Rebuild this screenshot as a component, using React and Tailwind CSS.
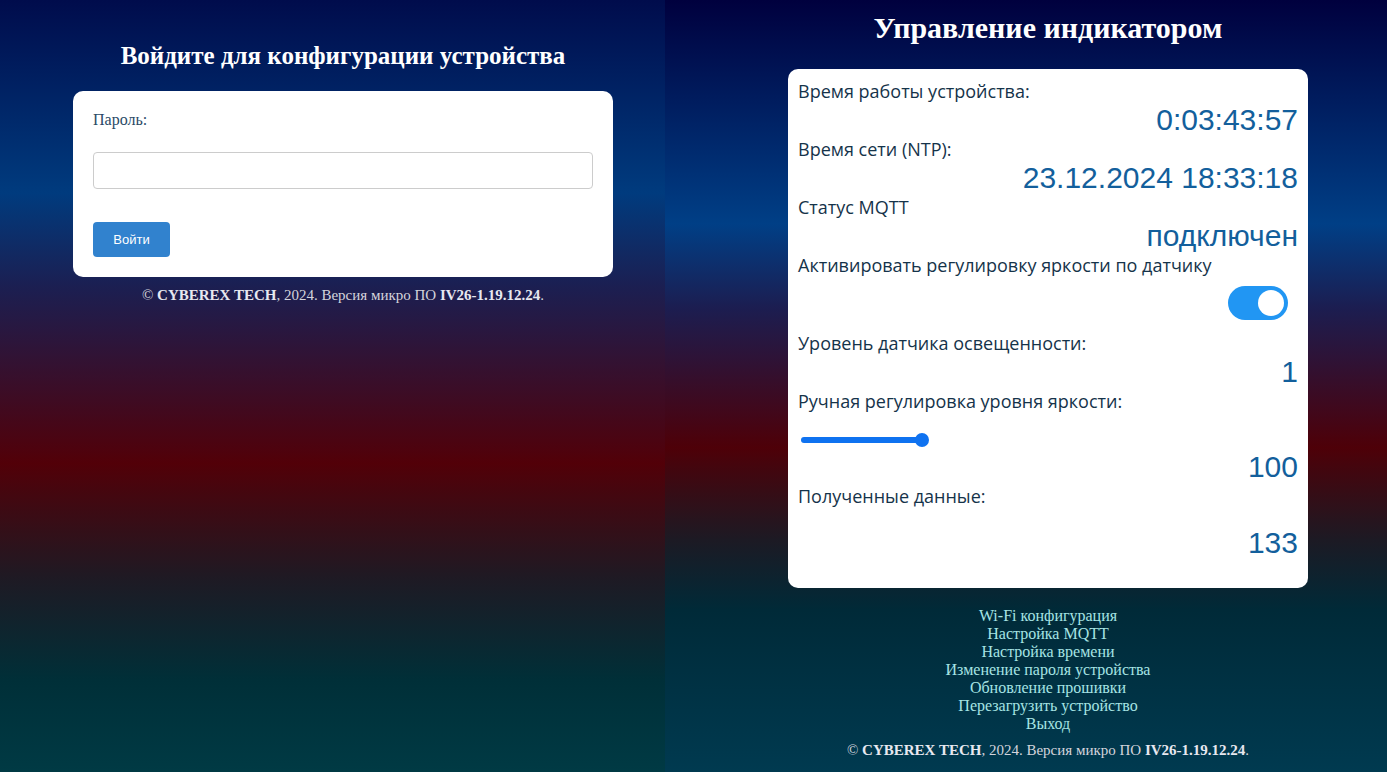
import React from "react";

const links = [
  "Wi-Fi конфигурация",
  "Настройка MQTT",
  "Настройка времени",
  "Изменение пароля устройства",
  "Обновление прошивки",
  "Перезагрузить устройство",
  "Выход",
];

const Footer = ({ className = "" }) => (
  <p className={`text-center text-[15px] leading-[16px] text-[#d4d4dc] ${className}`}>
    © <b className="text-[#e8e8f0]">CYBEREX TECH</b>, 2024. Версия микро ПО <b className="text-[#e8e8f0]">IV26-1.19.12.24</b>.
  </p>
);

const Label = ({ children, className = "" }) => (
  <div className={`h-[26px] text-[18px] leading-[26px] text-[#15334a] ${className}`}>{children}</div>
);

const Value = ({ children, className = "" }) => (
  <div className={`h-[32px] text-right text-[30px] leading-[32px] text-[#135f9c] font-['Liberation_Sans',Arial,sans-serif] ${className}`}>
    {children}
  </div>
);

export default function App() {
  return (
    <div className="flex h-[772px] w-full overflow-hidden font-['Liberation_Serif','Times_New_Roman',serif]">
      {/* login frame */}
      <div className="h-full w-[665px] shrink-0 bg-[linear-gradient(to_bottom,#000c4c_0%,#003b7e_25%,#1b1f52_37%,#520008_60%,#1e1a24_75%,#002f38_88%,#003a44_100%)]">
        <div className="ml-[73px] w-[540px] pt-[42px]">
          <h1 className="text-center text-[25px] font-bold leading-[28px] text-white">
            Войдите для конфигурации устройства
          </h1>
          <div className="mt-[21px] rounded-[10px] bg-white p-[20px]">
            <label className="block text-[16px] leading-[18px] text-[#2a4a66]">Пароль:</label>
            <input
              type="password"
              className="mt-[23px] block h-[37px] w-full rounded-[4px] border border-[#cccccc] bg-white"
            />
            <button className="mt-[33px] h-[35px] w-[77px] rounded-[4px] bg-[#3182ce] text-[13px] text-white font-['Liberation_Sans',Arial,sans-serif]">
              Войти
            </button>
          </div>
          <Footer className="mt-[10px]" />
        </div>
      </div>

      {/* control frame */}
      <div className="h-full flex-1 bg-[linear-gradient(to_bottom,#00003e_0%,#003f86_29%,#1c1d50_40%,#4e0008_58%,#1c1a24_70%,#002a38_79%,#003a50_100%)]">
        <div className="ml-[123px] w-[520px] pt-[11px]">
          <h1 className="text-center text-[30px] font-bold leading-[34px] text-white">Управление индикатором</h1>
          <div className="mt-[24px] rounded-[10px] bg-white px-[10px] pb-[29px] pt-[9px] font-['Open_Sans',sans-serif]">
            <Label>Время работы устройства:</Label>
            <Value>0:03:43:57</Value>
            <Label>Время сети (NTP):</Label>
            <Value>23.12.2024 18:33:18</Value>
            <Label>Статус MQTT</Label>
            <Value>подключен</Value>
            <Label>Активировать регулировку яркости по датчику</Label>
            <div className="mt-[8px] flex justify-end pr-[10px]">
              <div className="flex h-[34px] w-[60px] items-center justify-end rounded-full bg-[#2196f3] pr-[4px]">
                <div className="h-[26px] w-[26px] rounded-full bg-white" />
              </div>
            </div>
            <Label className="mt-[10px]">Уровень датчика освещенности:</Label>
            <Value>1</Value>
            <Label>Ручная регулировка уровня яркости:</Label>
            <div className="mt-[16px] flex h-[20px] items-center pl-[3px]">
              <div className="relative h-[6px] w-[124px] rounded-full bg-[#0f72f0]">
                <div className="absolute right-[-4px] top-[-4px] h-[14px] w-[14px] rounded-full bg-[#0f72f0]" />
              </div>
            </div>
            <Value className="mt-[1px]">100</Value>
            <Label>Полученные данные:</Label>
            <Value className="mt-[18px]">133</Value>
          </div>
          <nav className="mt-[19px] flex flex-col items-center text-[16px] leading-[18px] text-[#a6e4e4]">
            {links.map((l) => (
              <a key={l} href="#" className="text-[#a6e4e4]">
                {l}
              </a>
            ))}
          </nav>
          <Footer className="mt-[9px]" />
        </div>
      </div>
    </div>
  );
}
